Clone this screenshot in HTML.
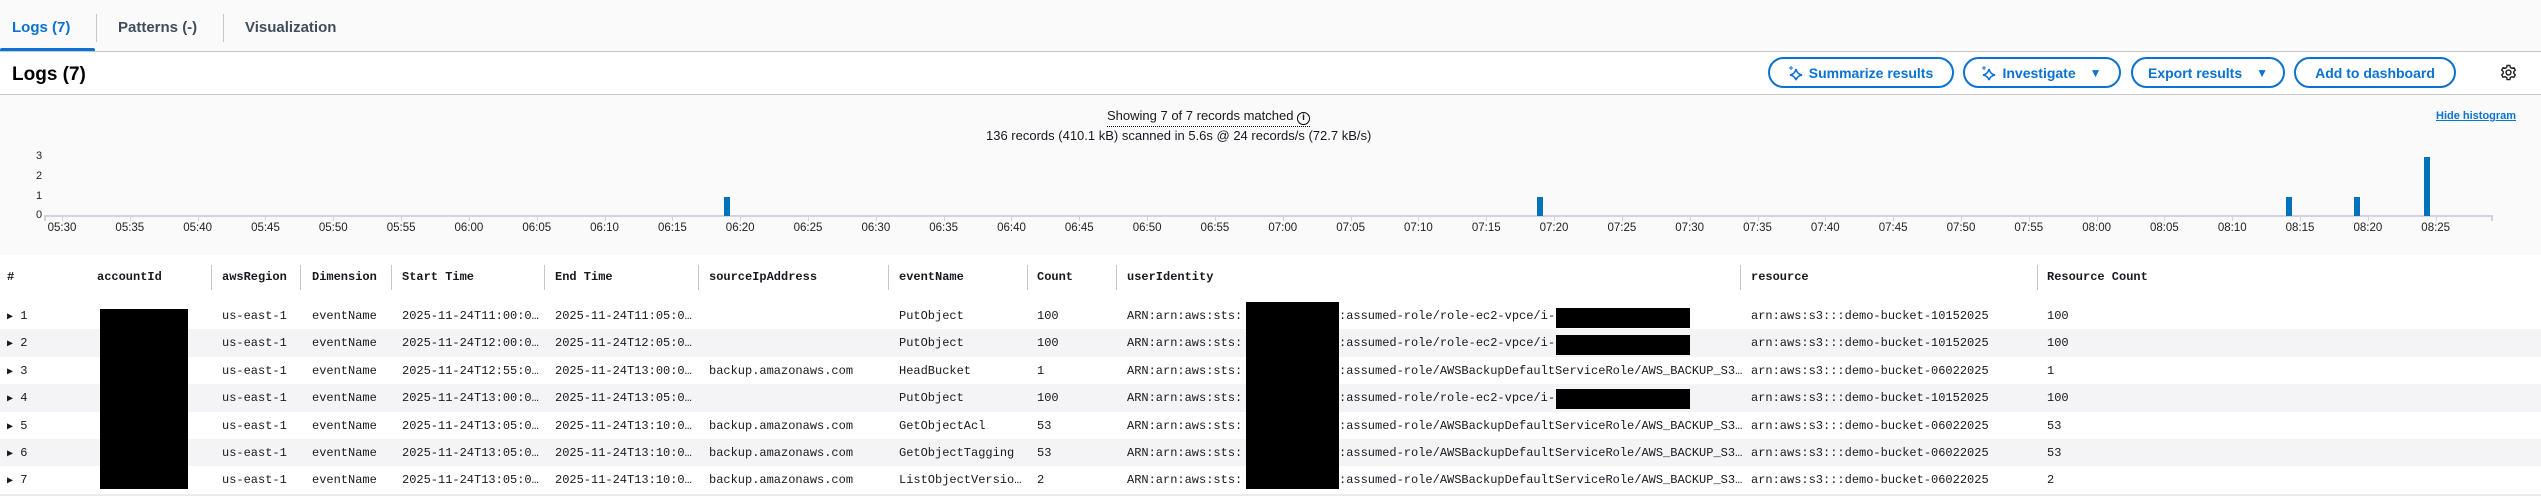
<!DOCTYPE html>
<html><head><meta charset="utf-8"><style>
*{margin:0;padding:0;box-sizing:border-box}
body{width:2541px;height:498px;position:relative;overflow:hidden;background:#fff;font-family:"Liberation Sans",sans-serif;color:#16191f}
.a{position:absolute;white-space:nowrap}
.tab{font-size:15px;font-weight:bold;color:#414d5c;top:19px}
.btn{position:absolute;top:57px;height:31px;border:2px solid #0972d3;border-radius:16px;color:#0972d3;font-weight:bold;font-size:14px;display:flex;align-items:center;justify-content:center;gap:6px}
.yl{font-size:11px;color:#222;left:36px}
.tk{font-size:11.5px;color:#222;top:222px;transform:translateX(-50%)}
.bar{position:absolute;background:#0073bb;width:6px}
.m{font-family:"Liberation Mono",monospace;font-size:12px}
.h{font-weight:bold;top:270px}
.sep{position:absolute;top:265px;height:25px;width:1px;background:#c6c6cd}
.row{position:absolute;left:0;width:2541px;height:27.4px}
.blk{position:absolute;background:#000}
</style></head><body>
<div class="a" style="left:0;top:0;width:2541px;height:51px;background:#fafafa"></div>
<div class="a tab" style="left:12px;color:#0972d3">Logs (7)</div>
<div class="a" style="left:96px;top:14px;width:1px;height:28px;background:#c6c6cd"></div>
<div class="a tab" style="left:118px">Patterns (-)</div>
<div class="a" style="left:223px;top:14px;width:1px;height:28px;background:#c6c6cd"></div>
<div class="a tab" style="left:245px">Visualization</div>
<div class="a" style="left:0;top:48px;width:95px;height:4px;background:#0972d3;border-radius:2px"></div>
<div class="a" style="left:0;top:51px;width:2541px;height:1px;background:#c6c6cd"></div>
<div class="a" style="left:12px;top:64px;font-size:19px;font-weight:bold;color:#000">Logs (7)</div>
<div class="a" style="left:0;top:94px;width:2541px;height:1px;background:#c6c6cd"></div>

<div class="btn" style="left:1768px;width:186px"><svg width="14" height="16" viewBox="0 0 14 16"><path d="M7 4 Q8 9 13 10 Q8 11 7 15 Q6 11 1 10 Q6 9 7 4Z" fill="none" stroke="#0972d3" stroke-width="1.6"/><path d="M2 1v4M0 3h4" stroke="#0972d3" stroke-width="1"/></svg>Summarize results</div>
<div class="btn" style="left:1963px;width:158px"><svg width="14" height="16" viewBox="0 0 14 16"><path d="M7 4 Q8 9 13 10 Q8 11 7 15 Q6 11 1 10 Q6 9 7 4Z" fill="none" stroke="#0972d3" stroke-width="1.6"/><path d="M2 1v4M0 3h4" stroke="#0972d3" stroke-width="1"/></svg>Investigate <span style="font-size:12px;margin-left:8px">▼</span></div>
<div class="btn" style="left:2131px;width:154px">Export results <span style="font-size:12px;margin-left:8px">▼</span></div>
<div class="btn" style="left:2294px;width:162px">Add to dashboard</div>
<svg class="a" style="left:2500px;top:64px" width="17" height="17" viewBox="0 0 24 24"><path d="M12 8.5a3.5 3.5 0 1 0 0 7a3.5 3.5 0 1 0 0-7Z M10 2h4l.6 2.8 2.3 1.3 2.7-.9 2 3.5-2.1 1.9v2.8l2.1 1.9-2 3.5-2.7-.9-2.3 1.3L14 22h-4l-.6-2.8-2.3-1.3-2.7.9-2-3.5 2.1-1.9v-2.8L2.4 8.7l2-3.5 2.7.9 2.3-1.3Z" fill="none" stroke="#222" stroke-width="2"/></svg>

<div class="a" style="left:0;top:95px;width:2541px;height:160px;background:#fafafa"></div>
<div class="a" style="left:2436px;top:110px;font-size:11px;color:#0972d3;text-decoration:underline;font-weight:bold">Hide histogram</div>
<div class="a" style="left:1107px;top:108px;font-size:13px;border-bottom:1px dotted #000;padding-bottom:1px">Showing 7 of 7 records matched <span style="display:inline-block;width:13px;height:13px;border:1.5px solid #000;border-radius:50%;font-size:10px;text-align:center;line-height:10px;font-weight:bold">i</span></div>
<div class="a" style="left:986px;top:128px;font-size:13px">136 records (410.1 kB) scanned in 5.6s @ 24 records/s (72.7 kB/s)</div>
<div class="a yl" style="top:150px">3</div>
<div class="a yl" style="top:170px">2</div>
<div class="a yl" style="top:190px">1</div>
<div class="a yl" style="top:209px">0</div>
<div class="a" style="left:45px;top:215px;width:2448px;height:2px;background:#d1d5db"></div>
<div class="a" style="left:44px;top:215px;width:2px;height:6px;background:#d1d5db"></div>
<div class="a" style="left:2491px;top:215px;width:2px;height:6px;background:#d1d5db"></div>
<div id="ticks"></div>
<div class="bar" style="left:724px;top:197px;height:19px"></div>
<div class="bar" style="left:1537px;top:197px;height:19px"></div>
<div class="bar" style="left:2286px;top:197px;height:19px"></div>
<div class="bar" style="left:2354px;top:197px;height:19px"></div>
<div class="bar" style="left:2424px;top:157px;height:59px"></div>

<div class="row" style="top:302px;background:#fff"></div>
<div class="row" style="top:329.4px;background:#f4f4f6"></div>
<div class="row" style="top:384.2px;background:#f4f4f6"></div>
<div class="row" style="top:439px;background:#f4f4f6"></div>
<div class="a" style="left:0;top:494px;width:2541px;height:2px;background:#e9ebed"></div>

<div class="a m h" style="left:7px">#</div>
<div class="a m h" style="left:97px">accountId</div>
<div class="sep" style="left:211px"></div><div class="a m h" style="left:222px">awsRegion</div>
<div class="sep" style="left:300px"></div><div class="a m h" style="left:312px">Dimension</div>
<div class="sep" style="left:391px"></div><div class="a m h" style="left:402px">Start Time</div>
<div class="sep" style="left:544px"></div><div class="a m h" style="left:555px">End Time</div>
<div class="sep" style="left:698px"></div><div class="a m h" style="left:709px">sourceIpAddress</div>
<div class="sep" style="left:888px"></div><div class="a m h" style="left:899px">eventName</div>
<div class="sep" style="left:1027px"></div><div class="a m h" style="left:1037px">Count</div>
<div class="sep" style="left:1116px"></div><div class="a m h" style="left:1127px">userIdentity</div>
<div class="sep" style="left:1740px"></div><div class="a m h" style="left:1751px">resource</div>
<div class="sep" style="left:2037px"></div><div class="a m h" style="left:2047px">Resource Count</div>

<div id="rows"></div>
<div class="blk" style="left:100px;top:309px;width:88px;height:180px"></div>
<div class="blk" style="left:1246px;top:302px;width:93px;height:187px"></div>
<div class="blk" style="left:1556px;top:308px;width:134px;height:20px"></div>
<div class="blk" style="left:1556px;top:335px;width:134px;height:20px"></div>
<div class="blk" style="left:1556px;top:389px;width:134px;height:20px"></div>
<script>
var t='';
for(var i=0;i<36;i++){var m=330+i*5;var h=Math.floor(m/60),mm=m%60;var lab=('0'+h).slice(-2)+':'+('0'+mm).slice(-2);var x=62+i*67.82;
t+='<div class="a" style="left:'+x+'px;top:216px;width:1px;height:5px;background:#d1d5db"></div><div class="a tk" style="left:'+x+'px">'+lab+'</div>';}
document.getElementById('ticks').innerHTML=t;
var D=[['1','2025-11-24T11:00:0…','2025-11-24T11:05:0…','','PutObject','100','role-ec2-vpce/i-','arn:aws:s3:::demo-bucket-10152025','100'],
['2','2025-11-24T12:00:0…','2025-11-24T12:05:0…','','PutObject','100','role-ec2-vpce/i-','arn:aws:s3:::demo-bucket-10152025','100'],
['3','2025-11-24T12:55:0…','2025-11-24T13:00:0…','backup.amazonaws.com','HeadBucket','1','AWSBackupDefaultServiceRole/AWS_BACKUP_S3…','arn:aws:s3:::demo-bucket-06022025','1'],
['4','2025-11-24T13:00:0…','2025-11-24T13:05:0…','','PutObject','100','role-ec2-vpce/i-','arn:aws:s3:::demo-bucket-10152025','100'],
['5','2025-11-24T13:05:0…','2025-11-24T13:10:0…','backup.amazonaws.com','GetObjectAcl','53','AWSBackupDefaultServiceRole/AWS_BACKUP_S3…','arn:aws:s3:::demo-bucket-06022025','53'],
['6','2025-11-24T13:05:0…','2025-11-24T13:10:0…','backup.amazonaws.com','GetObjectTagging','53','AWSBackupDefaultServiceRole/AWS_BACKUP_S3…','arn:aws:s3:::demo-bucket-06022025','53'],
['7','2025-11-24T13:05:0…','2025-11-24T13:10:0…','backup.amazonaws.com','ListObjectVersio…','2','AWSBackupDefaultServiceRole/AWS_BACKUP_S3…','arn:aws:s3:::demo-bucket-06022025','2']];
var r='';
D.forEach(function(d,i){var y=309+i*27.4;function c(x,s){r+='<div class="a m" style="left:'+x+'px;top:'+y+'px">'+s+'</div>';}
c(7,'<span style="font-size:10px">▶</span> '+d[0]);c(222,'us-east-1');c(312,'eventName');c(402,d[1]);c(555,d[2]);c(709,d[3]);c(899,d[4]);c(1037,d[5]);
c(1127,'ARN:arn:aws:sts:');c(1339,':assumed-role/'+d[6]);c(1751,d[7]);c(2047,d[8]);});
document.getElementById('rows').innerHTML=r;
</script>
</body></html>
